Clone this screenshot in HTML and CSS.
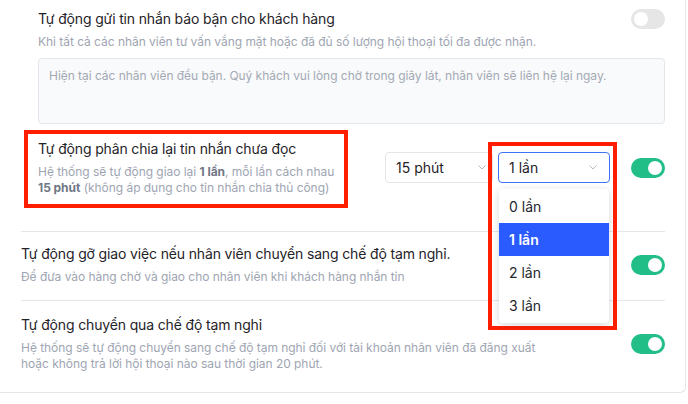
FILE: index.html
```html
<!DOCTYPE html>
<html lang="vi">
<head>
  <meta charset="UTF-8" />
  <meta name="viewport" content="width=device-width, initial-scale=1" />
  <title>Cài đặt phân chia hội thoại</title>
  <link rel="stylesheet" href="styles.css">
</head>
<body>
  <div class="card">
    <div class="group">
      <div class="row row-busy">
        <div class="head">
          <div class="title">Tự động gửi tin nhắn báo bận cho khách hàng</div>
          <span class="toggle"></span>
        </div>
        <div class="desc">Khi tất cả các nhân viên tư vấn vắng mặt hoặc đã đủ số lượng hội thoại tối đa được nhận.</div>
        <textarea class="message" placeholder="Hiện tại các nhân viên đều bận. Quý khách vui lòng chờ trong giây lát, nhân viên sẽ liên hệ lại ngay."></textarea>
      </div>

      <div class="row row-resend">
        <div class="info">
          <div class="title">Tự động phân chia lại tin nhắn chưa đọc</div>
          <div class="desc">Hệ thống sẽ tự động giao lại <b>1 lần</b>, mỗi lần cách nhau <b>15&nbsp;phút</b> (không áp dụng cho tin nhắn chia thủ công)</div>
        </div>
        <div class="controls">
          <div class="select select-time">
            <span>15 phút</span>
            <svg width="8" height="5" viewBox="0 0 8 5"><polyline points="0.5,0.5 4,4 7.5,0.5" fill="none" stroke="#b4b9c2" stroke-width="1"/></svg>
          </div>
          <div class="select select-count is-open">
            <span>1 lần</span>
            <svg width="8" height="5" viewBox="0 0 8 5"><polyline points="0.5,0.5 4,4 7.5,0.5" fill="none" stroke="#b4b9c2" stroke-width="1"/></svg>
            <ul class="menu">
              <li>0 lần</li>
              <li class="active">1 lần</li>
              <li>2 lần</li>
              <li>3 lần</li>
            </ul>
          </div>
          <span class="toggle on"></span>
        </div>
      </div>
    </div>

    <div class="row row-line row-unassign">
      <div class="info">
        <div class="title">Tự động gỡ giao việc nếu nhân viên chuyển sang chế độ tạm nghỉ.</div>
        <div class="desc">Để đưa vào hàng chờ và giao cho nhân viên khi khách hàng nhắn tin</div>
      </div>
      <span class="toggle on"></span>
    </div>

    <div class="row row-line row-away">
      <div class="info">
        <div class="title">Tự động chuyển qua chế độ tạm nghỉ</div>
        <div class="desc">Hệ thống sẽ tự động chuyển sang chế độ tạm nghỉ đối với tài khoản nhân viên đã đăng xuất hoặc không trả lời hội thoại nào sau thời gian 20 phút.</div>
      </div>
      <span class="toggle on"></span>
    </div>

    <!-- khung đánh dấu -->
    <div class="mark mark-info"></div>
    <div class="mark mark-menu"></div>
  </div>
</body>
</html>
```

FILE: styles.css
```css
body {
  margin: 0;
  padding: 0;
  background: #fff;
  font-family: Inter, "Noto Sans", Arial, sans-serif;
  color: #1f2329;
}

.card {
  position: relative;
  width: 686px;
  height: 393px;
  box-sizing: border-box;
  padding: 0 20px 0 21px;
  border-right: 1px solid #e3e6ea;
  border-bottom: 1px solid #e3e6ea;
  border-bottom-right-radius: 6px;
}

.group {
  padding-left: 17px;
}

.row {
  display: flex;
  align-items: center;
}

.title {
  font-size: 14px;
  line-height: 20px;
  letter-spacing: -0.15px;
}

.desc {
  margin-top: 5px;
  font-size: 12px;
  line-height: 16px;
  letter-spacing: -0.04px;
  color: #9ea5b2;
}

.desc b {
  color: #6f7785;
  font-weight: 700;
}

.info {
  max-width: 530px;
}

/* dòng 1 */
.row-busy {
  display: block;
  padding-top: 9px;
}

.row-busy .head {
  display: flex;
  align-items: center;
  justify-content: space-between;
}

.message {
  display: block;
  width: 100%;
  height: 66px;
  margin-top: 8px;
  box-sizing: border-box;
  padding: 9px 10px;
  border: 1px solid #e3e6ea;
  border-radius: 4px;
  background: #f9fafb;
  font-family: inherit;
  font-size: 12px;
  line-height: 16px;
  letter-spacing: -0.04px;
  resize: none;
}

.message::placeholder {
  color: #a3a9b4;
}

/* dòng 2 */
.row-resend {
  padding: 15px 0 35px;
}

.row-resend .info {
  width: 305px;
}

.controls {
  display: flex;
  align-items: center;
  margin-left: auto;
}

.select {
  position: relative;
  display: flex;
  align-items: center;
  justify-content: space-between;
  height: 31px;
  box-sizing: border-box;
  padding: 0 12px 0 10px;
  border: 1px solid #e3e6ea;
  border-radius: 4px;
  font-size: 14px;
  background: #fff;
}

.select-time {
  width: 108px;
  padding-right: 6px;
}

.select-count {
  width: 112px;
  margin-left: 5px;
  padding-right: 12px;
}

.select.is-open {
  border-color: #3f72f6;
}

.menu {
  position: absolute;
  left: 0;
  top: 36px;
  width: 110px;
  margin: 0;
  padding: 1px 0;
  list-style: none;
  background: #fff;
  border-radius: 4px;
  box-shadow: 0 2px 8px rgba(0, 0, 0, 0.16);
  z-index: 5;
}

.menu li {
  height: 33px;
  line-height: 33px;
  padding-left: 10px;
  font-size: 14px;
  color: #25282d;
}

.menu li.active {
  background: #2a5bff;
  color: #fff;
  font-weight: 600;
}

.controls .toggle {
  margin-left: 21px;
}

/* dòng 3, 4 */
.row-line {
  justify-content: space-between;
  border-top: 1px solid #e3e6ea;
}

.row-unassign {
  padding: 12px 0 15px;
}

.row-away {
  padding: 14px 0 19px;
}

.toggle {
  position: relative;
  flex-shrink: 0;
  width: 34px;
  height: 20px;
  border-radius: 10px;
  background: #e6e6e6;
}

.toggle::after {
  content: "";
  position: absolute;
  top: 3px;
  left: 3px;
  width: 14px;
  height: 14px;
  border-radius: 50%;
  background: #fff;
}

.toggle.on {
  background: #21bf87;
}

.toggle.on::after {
  left: 17px;
}

.mark {
  position: absolute;
  box-sizing: border-box;
  border: 4px solid #ff1f00;
  pointer-events: none;
}

.mark-info {
  left: 24px;
  top: 130px;
  width: 324px;
  height: 78px;
}

.mark-menu {
  left: 488px;
  top: 142px;
  width: 129px;
  height: 188px;
}
```
